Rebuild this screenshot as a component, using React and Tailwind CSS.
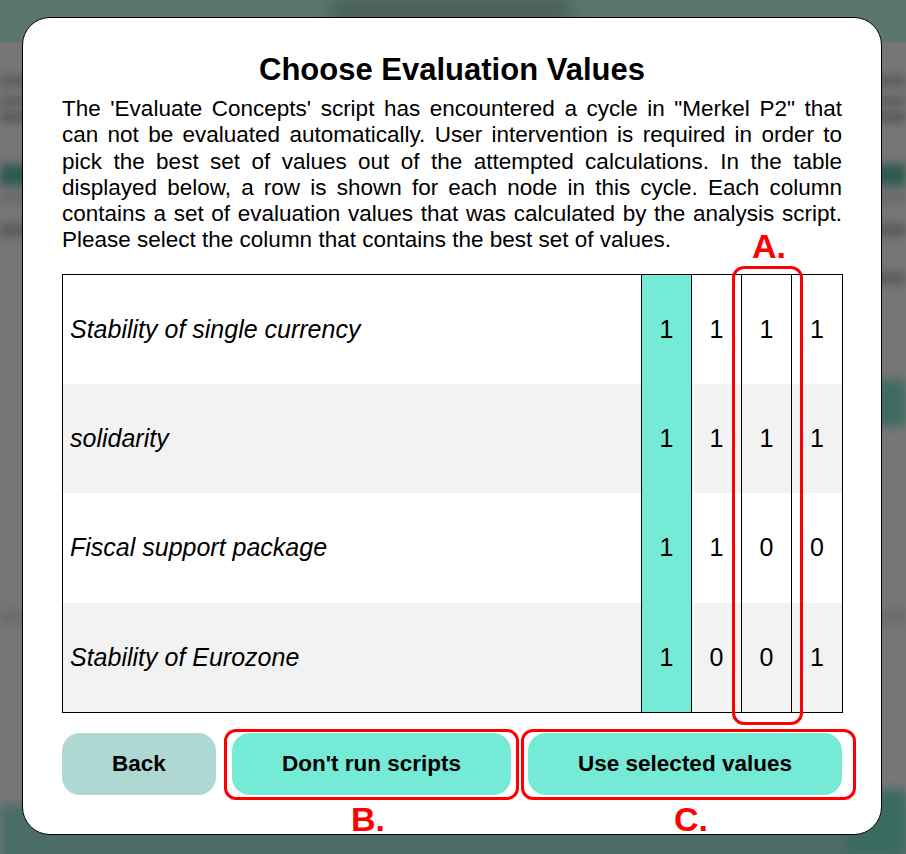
import React from 'react';

const rows = [
  { label: 'Stability of single currency', values: [1, 1, 1, 1] },
  { label: 'solidarity', values: [1, 1, 1, 1] },
  { label: 'Fiscal support package', values: [1, 1, 0, 0] },
  { label: 'Stability of Eurozone', values: [1, 0, 0, 1] },
];

// line breaks follow the original dialog
const lines = [
  `The 'Evaluate Concepts' script has encountered a cycle in "Merkel P2" that`,
  'can not be evaluated automatically. User intervention is required in order to',
  'pick the best set of values out of the attempted calculations. In the table',
  'displayed below, a row is shown for each node in this cycle. Each column',
  'contains a set of evaluation values that was calculated by the analysis script.',
  'Please select the column that contains the best set of values.',
];

const Backdrop = () => (
  <div className="absolute inset-0 bg-[#767676] overflow-hidden">
    <div className="absolute left-0 top-0 w-full h-[42px] bg-[#5b756f]" />
    <div className="absolute left-[330px] top-[0px] w-[240px] h-[20px] bg-[#3a4f4a] blur-[8px] opacity-60" />
    {/* blurred page content */}
    <div className="absolute left-0 top-[76px] w-full h-[10px] bg-[#5c5c5c] blur-[4px]" />
    <div className="absolute left-0 top-[96px] w-full h-[10px] bg-[#5e5e5e] blur-[4px]" />
    <div className="absolute left-0 top-[112px] w-full h-[10px] bg-[#585858] blur-[4px]" />
    <div className="absolute left-0 top-[164px] w-full h-[22px] bg-[#2f5a50] blur-[5px]" />
    <div className="absolute left-0 top-[194px] w-full h-[8px] bg-[#666] blur-[4px]" />
    <div className="absolute left-0 top-[224px] w-full h-[12px] bg-[#5a5a5a] blur-[4px]" />
    <div className="absolute right-0 top-[272px] w-[60px] h-[12px] bg-[#5c5c5c] blur-[4px]" />
    <div className="absolute right-0 top-[380px] w-[60px] h-[46px] bg-[#3f6b62] blur-[5px]" />
    <div className="absolute left-0 top-[610px] w-full h-[14px] bg-[#6c6c6c] blur-[4px]" />
    <div className="absolute left-0 top-[805px] w-full h-[60px] bg-[#4b6d66] blur-[5px]" />
    <div className="absolute right-0 top-[790px] w-[60px] h-[64px] bg-[#3b6a61] blur-[5px]" />
  </div>
);

export default function App() {
  return (
    <div
      className="relative w-[906px] h-[854px] overflow-hidden"
      style={{ fontFamily: '"Liberation Sans", Arial, sans-serif' }}
    >
      <Backdrop />

      <div className="relative ml-[22px] mt-[17px] w-[860px] h-[818px] bg-white border border-black rounded-[28px] px-[39px] pt-[35px] text-black">
        <h1 className="text-[31px] leading-[34px] font-bold text-center">Choose Evaluation Values</h1>
        <div className="mt-[9px] text-[22.5px] leading-[26.3px]">
          {lines.map((line, i) => (
            <div
              key={i}
              className={i < lines.length - 1 ? 'text-justify [text-align-last:justify] whitespace-nowrap' : 'text-left'}
            >
              {line}
            </div>
          ))}
        </div>

        <table className="mt-[20px] w-[780px] border-collapse border border-black table-fixed">
          <colgroup>
            <col className="w-[579px]" />
            <col className="w-[50px]" />
            <col className="w-[50px]" />
            <col className="w-[50px]" />
            <col className="w-[51px]" />
          </colgroup>
          <tbody>
            {rows.map((row, i) => (
              <tr key={row.label} className={i % 2 === 1 ? 'bg-[#f2f2f2] h-[109.5px]' : 'bg-white h-[109.5px]'}>
                <td className="pl-[7px] text-[25px] italic">{row.label}</td>
                <td className="bg-[#75ead6] border-l border-r border-black text-center text-[25px]">{row.values[0]}</td>
                <td className="text-center text-[25px]">{row.values[1]}</td>
                <td className="border-l border-r border-black text-center text-[25px]">{row.values[2]}</td>
                <td className="text-center text-[25px]">{row.values[3]}</td>
              </tr>
            ))}
          </tbody>
        </table>

        <div className="mt-[20px] flex gap-[16px]">
          <button className="w-[154px] h-[62px] rounded-[18px] bg-[#aed8d1] text-[22.5px] font-bold">Back</button>
          <button className="w-[279px] h-[62px] rounded-[18px] bg-[#75ead6] text-[22.5px] font-bold">Don't run scripts</button>
          <button className="ml-[1px] w-[314px] h-[62px] rounded-[18px] bg-[#75ead6] text-[22.5px] font-bold">Use selected values</button>
        </div>

        {/* annotations */}
        <div className="absolute left-[709px] top-[248px] w-[71px] h-[459px] border-[3px] border-[#ff0000] rounded-[12px]" />
        <div className="absolute left-[726px] top-[208px] w-[40px] text-center text-[34px] leading-[40px] font-bold text-[#ff0000]">A.</div>
        <div className="absolute left-[201px] top-[711px] w-[295px] h-[71px] border-[3px] border-[#ff0000] rounded-[12px]" />
        <div className="absolute left-[325px] top-[781px] w-[40px] text-center text-[34px] leading-[40px] font-bold text-[#ff0000]">B.</div>
        <div className="absolute left-[498px] top-[711px] w-[335px] h-[71px] border-[3px] border-[#ff0000] rounded-[12px]" />
        <div className="absolute left-[648px] top-[781px] w-[40px] text-center text-[34px] leading-[40px] font-bold text-[#ff0000]">C.</div>
      </div>
    </div>
  );
}
